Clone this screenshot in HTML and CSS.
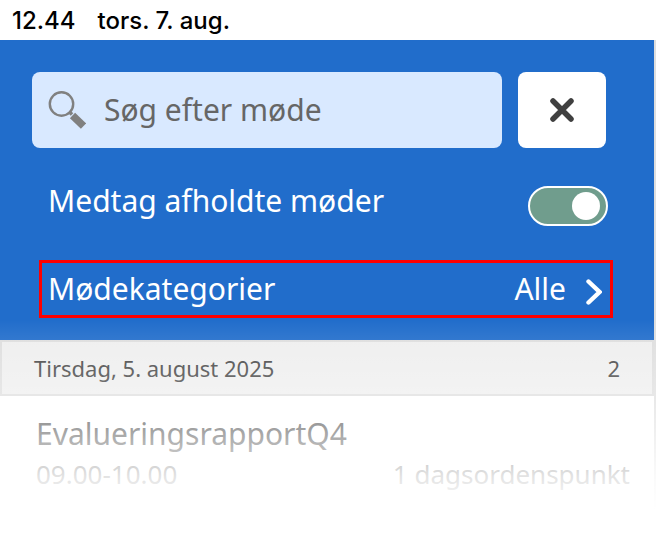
FILE: index.html
```html
<!DOCTYPE html>
<html lang="da">
<head>
    <meta charset="UTF-8">
    <meta name="viewport" content="width=device-width, initial-scale=1.0">
    <title>Møder</title>
    <link rel="stylesheet" href="styles.css">
</head>
<body>
    <div class="status-bar">
        <span>12.44</span>
        <span>tors. 7. aug.</span>
    </div>

    <main class="panel">
        <section class="filters">
            <form class="search-row">
                <label class="search">
                    <svg class="search-icon" viewBox="0 0 38 38" aria-hidden="true">
                        <circle cx="13.500" cy="13" r="11.700" fill="none" stroke="#808080" stroke-width="2.400"/>
                        <path d="M21 20.500l3 3" stroke="#808080" stroke-width="3.500"/>
                        <path d="M24.500 24.500l11 10.500" stroke="#808080" stroke-width="7.500"/>
                    </svg>
                    <input type="text" class="search-input" placeholder="Søg efter møde" aria-label="Søg efter møde">
                </label>
                <button type="button" class="clear-button" aria-label="Luk">
                    <svg class="clear-icon" viewBox="0 0 24 24" aria-hidden="true">
                        <path d="M3 3l18 18M21 3L3 21" stroke="#404040" stroke-width="5.500" stroke-linecap="round"/>
                    </svg>
                </button>
            </form>

            <label class="toggle-row">
                <span>Medtag afholdte møder</span>
                <input type="checkbox" class="toggle" checked>
            </label>

            <button type="button" class="category-row">
                <span>Mødekategorier</span>
                <span class="category-value">Alle</span>
                <svg class="chevron" viewBox="0 0 16 26" aria-hidden="true">
                    <path d="M2.500 2.500L13.500 13L2.500 23.500" fill="none" stroke="#fff" stroke-width="4.400" stroke-linecap="round"/>
                </svg>
            </button>
        </section>

        <section class="meetings">
            <h2 class="date-row">
                <span>Tirsdag, 5. august 2025</span>
                <span>2</span>
            </h2>
            <article class="meeting">
                <h3 class="meeting-title">EvalueringsrapportQ4</h3>
                <div class="meeting-info">
                    <span>09.00-10.00</span>
                    <span>1 dagsordenspunkt</span>
                </div>
            </article>
            <div class="fade"></div>
        </section>
    </main>
</body>
</html>
```
FILE: styles.css
```css
* {
    margin: 0;
    padding: 0;
    box-sizing: border-box;
}

body {
    background: #fff;
    font-family: 'Noto Sans', 'Open Sans', sans-serif;
    font-weight: 400;
}

button,
input {
    font: inherit;
    color: inherit;
    border: none;
}

.status-bar {
    display: flex;
    align-items: center;
    gap: 22px;
    height: 40px;
    padding: 0 12px;
    color: #000;
    font-family: Inter, sans-serif;
    font-size: 24px;
    font-weight: 500;
}

.panel {
    border-right: 2px solid #dedede;
}

.filters {
    padding: 32px 0 22px;
    background: #216dcb;
    color: #fff;
    font-size: 30px;
    line-height: 40px;
}

.search-row {
    display: flex;
    gap: 16px;
    padding: 0 48px 0 32px;
}

.search {
    display: flex;
    flex: 1;
    align-items: center;
    gap: 18px;
    min-width: 0;
    height: 76px;
    padding: 0 16px;
    border-radius: 8px;
    background: #d9e9ff;
}

.search-icon {
    flex: none;
    width: 38px;
    height: 38px;
}

.search-input {
    flex: 1;
    min-width: 0;
    background: none;
    color: #666;
    outline: none;
}

.search-input::placeholder {
    color: #666;
    opacity: 1;
}

.clear-button {
    display: flex;
    align-items: center;
    justify-content: center;
    width: 88px;
    border-radius: 8px;
    background: #fff;
    cursor: pointer;
}

.clear-icon {
    width: 24px;
    height: 24px;
}

.toggle-row {
    display: flex;
    align-items: flex-end;
    justify-content: space-between;
    height: 78px;
    padding: 0 46px 0 48px;
}

.toggle-row span {
    padding-bottom: 5px;
}

.toggle {
    appearance: none;
    display: flex;
    align-items: center;
    justify-content: flex-end;
    width: 80px;
    height: 40px;
    padding: 0 6px;
    border: 2px solid #fff;
    border-radius: 20px;
    background: #709d8d;
    cursor: pointer;
}

.toggle::before {
    content: "";
    width: 28px;
    height: 28px;
    border-radius: 50%;
    background: #fff;
}

.toggle:not(:checked) {
    justify-content: flex-start;
}

.category-row {
    display: flex;
    align-items: center;
    width: calc(100% - 80px);
    height: 58px;
    margin: 34px 41px 0 39px;
    padding: 0 8px 0 6px;
    border: 3px solid #f00;
    background: none;
    cursor: pointer;
}

.category-value {
    margin-left: auto;
}

.chevron {
    width: 16px;
    height: 26px;
    margin: 6px 0 0 20px;
}

.meetings {
    position: relative;
    height: 190px;
    color: #404040;
}

.date-row {
    display: flex;
    align-items: center;
    justify-content: space-between;
    height: 56px;
    padding: 0 32px;
    border: 2px solid #ddd;
    background: #eee;
    font-size: 22px;
    font-weight: 400;
}

.meeting {
    padding: 18px 24px 0 36px;
}

.meeting-title {
    font-size: 30px;
    font-weight: 400;
    line-height: 40px;
}

.meeting-info {
    display: flex;
    justify-content: space-between;
    font-size: 26px;
    line-height: 40px;
}

/* list fades out towards the bottom */
.fade {
    position: absolute;
    inset: -20px -2px 0 0;
    background: linear-gradient(rgba(255, 255, 255, 0), rgba(255, 255, 255, 0.3) 76px, rgba(255, 255, 255, 0.5) 108px, rgba(255, 255, 255, 0.85) 156px, #fff 190px);
    pointer-events: none;
}
```
